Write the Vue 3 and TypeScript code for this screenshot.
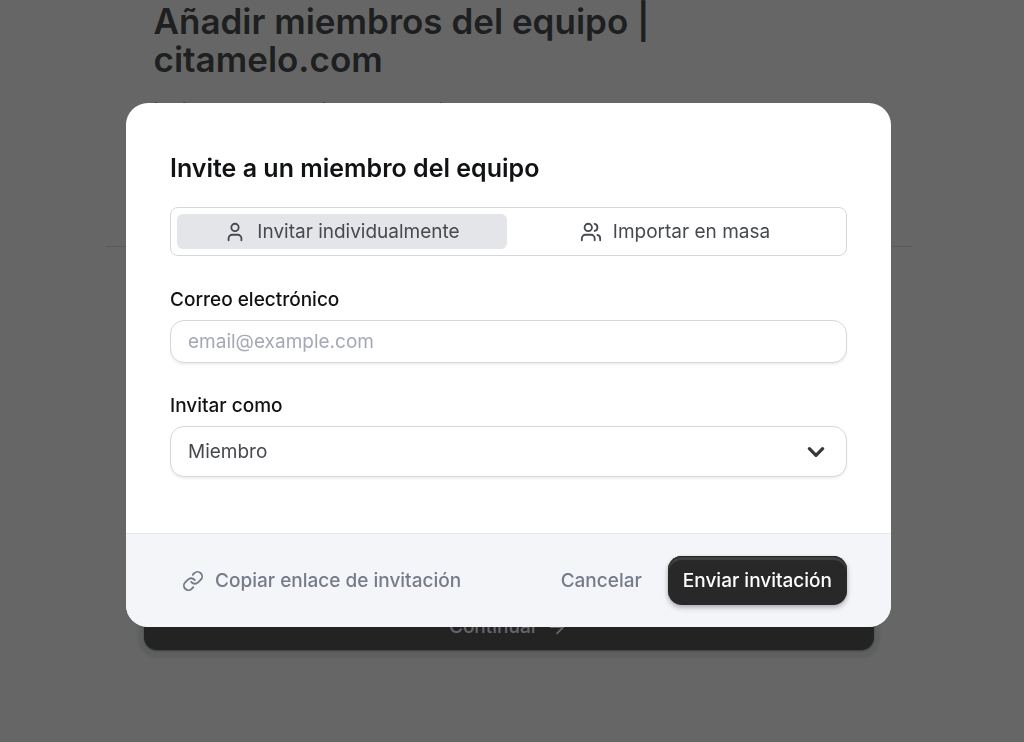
<script setup lang="ts">
import { ref } from 'vue'

type InviteMode = 'individual' | 'bulk'

const mode = ref<InviteMode>('individual')
const email = ref('')
const role = ref('MEMBER')

const roles = [
  { value: 'MEMBER', label: 'Miembro' },
  { value: 'ADMIN', label: 'Administrador' },
  { value: 'OWNER', label: 'Propietario' },
]
</script>

<template>
  <div class="app">
    <main class="page">
      <header class="page-head">
        <h1>Añadir miembros del equipo | citamelo.com</h1>
        <p>Invite a otros a unirse a tu equipo</p>
      </header>
      <hr class="rule" />
      <button type="button" class="continue">
        Continuar
        <svg viewBox="0 0 24 24" aria-hidden="true"><path d="M5 12h14M12 5l7 7-7 7" /></svg>
      </button>
    </main>

    <div class="overlay">
      <form class="modal" role="dialog" aria-modal="true" aria-labelledby="modal-title" @submit.prevent>
        <div class="modal-body">
          <h2 id="modal-title">Invite a un miembro del equipo</h2>

          <div class="toggle" role="group" aria-labelledby="modal-title">
            <button type="button" :class="{ active: mode === 'individual' }" :aria-pressed="mode === 'individual'" @click="mode = 'individual'">
              <svg viewBox="0 0 24 24" aria-hidden="true">
                <path d="M19 21v-2a4 4 0 0 0-4-4H9a4 4 0 0 0-4 4v2" />
                <circle cx="12" cy="7" r="4" />
              </svg>
              Invitar individualmente
            </button>
            <button type="button" :class="{ active: mode === 'bulk' }" :aria-pressed="mode === 'bulk'" @click="mode = 'bulk'">
              <svg viewBox="0 0 24 24" aria-hidden="true">
                <path d="M16 21v-2a4 4 0 0 0-4-4H6a4 4 0 0 0-4 4v2" />
                <circle cx="9" cy="7" r="4" />
                <path d="M22 21v-2a4 4 0 0 0-3-3.87M16 3.13a4 4 0 0 1 0 7.75" />
              </svg>
              Importar en masa
            </button>
          </div>

          <div class="field">
            <label for="email">Correo electrónico</label>
            <input id="email" v-model="email" type="email" placeholder="email@example.com" />
          </div>

          <div class="field">
            <label for="role">Invitar como</label>
            <div class="select">
              <select id="role" v-model="role">
                <option v-for="r in roles" :key="r.value" :value="r.value">{{ r.label }}</option>
              </select>
              <svg viewBox="0 0 20 20" aria-hidden="true"><path d="M4 7l6 6 6-6" /></svg>
            </div>
          </div>
        </div>

        <footer class="modal-foot">
          <button type="button" class="ghost copy">
            <svg viewBox="0 0 24 24" aria-hidden="true">
              <path d="M10 13a5 5 0 0 0 7.54.54l3-3a5 5 0 0 0-7.07-7.07l-1.72 1.71" />
              <path d="M14 11a5 5 0 0 0-7.54-.54l-3 3a5 5 0 0 0 7.07 7.07l1.71-1.71" />
            </svg>
            Copiar enlace de invitación
          </button>
          <button type="button" class="ghost">Cancelar</button>
          <button type="submit" class="primary">Enviar invitación</button>
        </footer>
      </form>
    </div>
  </div>
</template>

<style>
body {
  margin: 0;
  background: #666;
}
</style>

<style scoped>
.app {
  min-height: 100vh;
  overflow: hidden;
  font-family: Inter, "Liberation Sans", sans-serif;
  font-size: 19px;
  line-height: 24px;
}

.app * {
  box-sizing: border-box;
}

button,
input,
select {
  margin: 0;
  font: inherit;
}

button {
  display: flex;
  align-items: center;
  justify-content: center;
  padding: 0;
  border: 0;
  background: none;
  white-space: nowrap;
  cursor: pointer;
}

svg {
  flex: none;
  width: 22px;
  height: 22px;
  fill: none;
  stroke: currentColor;
  stroke-width: 2;
  stroke-linecap: round;
  stroke-linejoin: round;
}

.page {
  display: flex;
  flex-direction: column;
  width: 100%;
  max-width: 813px;
  margin: 0 auto;
  padding-right: 7px;
}

.page-head {
  padding: 2px 48px 0;
  height: 246px;
  color: #1e1f20;
}

h1 {
  max-width: 560px;
  margin: 0;
  font-size: 35px;
  font-weight: 600;
  line-height: 38px;
}

.page-head p {
  margin: 20px 0 0;
  color: #424446;
  font-size: 20px;
}

.rule {
  width: 100%;
  height: 1px;
  margin: 0;
  border: 0;
  background: #5a5a5a;
}

.continue {
  height: 49px;
  margin: 354px 38px 0;
  padding-top: 2px;
  gap: 8px;
  border-radius: 13px;
  background: #232323;
  box-shadow: 0 1px 2px #3c3e3e, 0 2px 2px 6px #5e6060;
  color: #666;
  font-weight: 500;
}

.overlay {
  position: fixed;
  inset: 0;
  display: flex;
  align-items: center;
  justify-content: center;
  padding: 0 7px 12px 0;
}

.modal {
  width: 100%;
  max-width: 765px;
  overflow: hidden;
  border-radius: 22px;
  background: #fff;
}

.modal-body {
  padding: 49px 44px 56px;
}

h2 {
  margin: 0 0 23px;
  color: #111214;
  font-size: 25px;
  font-weight: 600;
  line-height: 32px;
}

.toggle {
  display: grid;
  grid-template-columns: 1fr 1fr;
  gap: 3px;
  margin-bottom: 32px;
  padding: 6px;
  border: 1px solid #d5d7dd;
  border-radius: 8px;
}

.toggle button {
  height: 35px;
  gap: 11px;
  border-radius: 6px;
  color: #46494d;
}

.toggle .active {
  background: #e4e5e9;
}

.field + .field {
  margin-top: 31px;
}

label {
  display: block;
  margin-bottom: 8px;
  color: #111214;
  font-weight: 500;
}

input,
select {
  display: block;
  width: 100%;
  height: 43px;
  padding: 0 17px;
  border: 1px solid #d5d7dd;
  border-radius: 14px;
  background: #fff;
  box-shadow: 0 2px 2px #f0f1f3;
  color: #46494d;
}

input::placeholder {
  color: #a4a9b6;
  opacity: 1;
}

.select {
  display: grid;
  align-items: center;
}

.select > * {
  grid-area: 1 / 1;
}

select {
  height: 51px;
  appearance: none;
}

.select svg {
  justify-self: end;
  width: 22px;
  height: 22px;
  margin-right: 20px;
  color: #36383c;
  stroke-width: 3;
  pointer-events: none;
}

.modal-foot {
  display: flex;
  align-items: center;
  padding: 22px 44px;
  border-top: 1px solid #e5e7eb;
  background: #f4f5f8;
}

.ghost {
  height: 49px;
  padding: 0 12px;
  gap: 11px;
  color: #747b89;
  font-weight: 500;
}

.copy {
  margin-right: auto;
}

.primary {
  height: 49px;
  margin-left: 14px;
  padding: 0 15px;
  border-radius: 14px;
  background: #282828;
  box-shadow: inset 0 1px 1px #222, inset 0 4px 1px #424242, 0 2px 4px #a9abb0, 0 4px 4px 2px #e9eaed;
  color: #fff;
  font-weight: 500;
}
</style>
